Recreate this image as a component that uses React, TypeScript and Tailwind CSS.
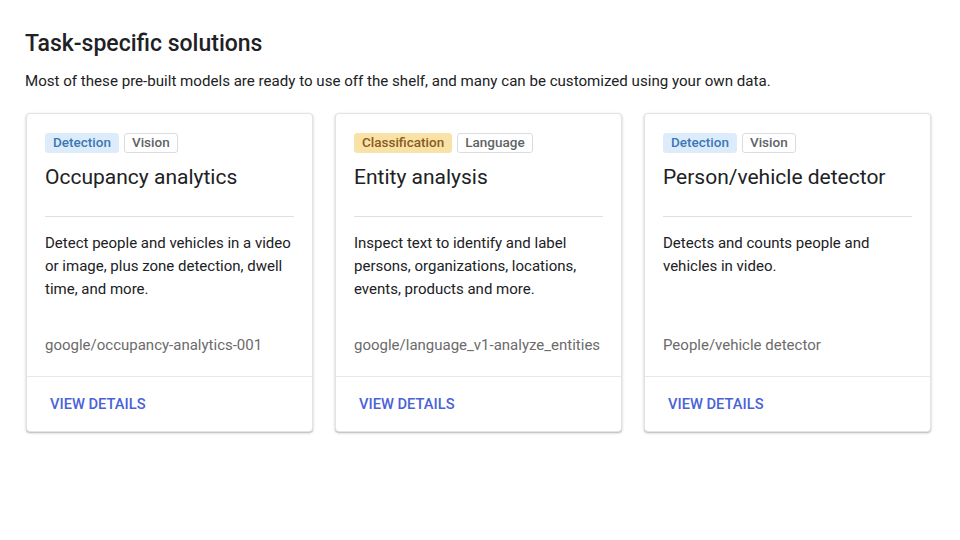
import React from "react";

type Tag = { label: string; kind: "blue" | "yellow" | "plain" };

type SolutionType = {
  id: number;
  tags: Tag[];
  title: string;
  description: string;
  model: string;
};

const solutions: SolutionType[] = [
  {
    id: 1,
    tags: [
      { label: "Detection", kind: "blue" },
      { label: "Vision", kind: "plain" },
    ],
    title: "Occupancy analytics",
    description:
      "Detect people and vehicles in a video or image, plus zone detection, dwell time, and more.",
    model: "google/occupancy-analytics-001",
  },
  {
    id: 2,
    tags: [
      { label: "Classification", kind: "yellow" },
      { label: "Language", kind: "plain" },
    ],
    title: "Entity analysis",
    description:
      "Inspect text to identify and label persons, organizations, locations, events, products and more.",
    model: "google/language_v1-analyze_entities",
  },
  {
    id: 3,
    tags: [
      { label: "Detection", kind: "blue" },
      { label: "Vision", kind: "plain" },
    ],
    title: "Person/vehicle detector",
    description: "Detects and counts people and vehicles in video.",
    model: "People/vehicle detector",
  },
];

const tagStyles = {
  blue: "bg-[#dcecfb] text-[#3c78b5] border-[#dcecfb]",
  yellow: "bg-[#f8e2a6] text-[#8a5b22] border-[#f8e2a6]",
  plain: "bg-white text-[#5f6368] border-[#dadce0]",
};

const SolutionCard = ({ item }: { item: SolutionType }) => {
  return (
    <div className="bg-white rounded-[4px] border border-[#e3e3e3] shadow-[0_1px_3px_rgba(0,0,0,0.22),0_1px_1px_rgba(0,0,0,0.1)] flex flex-col">
      <div className="px-[18px] pt-[19px]">
        <div className="flex gap-[5px]">
          {item.tags.map((tag) => (
            <span
              key={tag.label}
              className={`h-[20px] px-[7px] flex items-center rounded-[3px] border text-[13.5px] font-medium leading-none ${tagStyles[tag.kind]}`}
            >
              {tag.label}
            </span>
          ))}
        </div>
        <div className="mt-[10px] text-[21px] leading-[28px] text-[#202124]">
          {item.title}
        </div>
        <div className="mt-[25px] border-t border-[#e0e0e0]" />
        <div className="mt-[15px] h-[92px] text-[15px] leading-[23px] text-[#202124]">
          {item.description}
        </div>
        <div className="mt-[10px] pb-[20px] text-[15px] leading-[22px] text-[#6b6b6b]">
          {item.model}
        </div>
      </div>
      <div className="border-t border-[#e8e8e8] h-[55px] flex items-center pl-[23px]">
        <button className="text-[14.7px] font-medium text-[#4a62d8]">
          VIEW DETAILS
        </button>
      </div>
    </div>
  );
};

const App = () => {
  return (
    <div className="min-h-[540px] bg-white px-[25px] pt-[30px] font-['Roboto','Liberation_Sans',sans-serif]">
      <h1 className="text-[23px] leading-[28px] font-medium text-[#202124]">
        Task-specific solutions
      </h1>
      <p className="mt-[13px] text-[15.1px] leading-[20px] text-[#202124]">
        Most of these pre-built models are ready to use off the shelf, and many
        can be customized using your own data.
      </p>
      <div className="mt-[22px] grid grid-cols-[287px_287px_287px] gap-[22px] pl-px">
        {solutions.map((val) => (
          <SolutionCard key={val.id} item={val} />
        ))}
      </div>
    </div>
  );
};

export default App;
